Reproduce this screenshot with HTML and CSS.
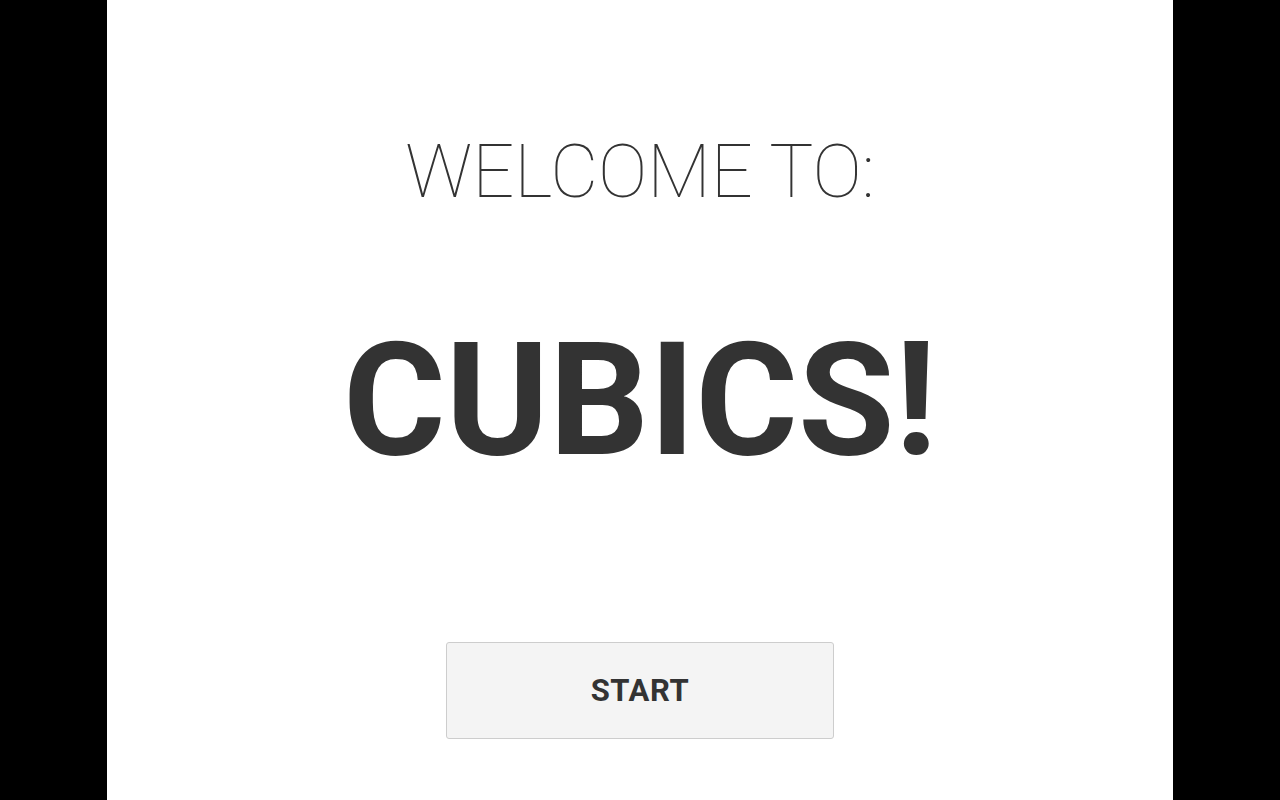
FILE: index.html
```html
<!DOCTYPE html>
<html>
<head>
<meta charset="utf-8">
<link rel="stylesheet" href="styles.css">
</head>
<body>
<div class="frame">
  <main class="screen">
    <h2 class="welcome">WELCOME TO:</h2>
    <h1 class="title">CUBICS!</h1>
    <button class="start">START</button>
  </main>
</div>
</body>
</html>
```
FILE: styles.css
```css
html, body {
  margin: 0;
  padding: 0;
  height: 100%;
  background: #000;
}
.frame {
  display: flex;
  justify-content: center;
  height: 800px;
}
.screen {
  width: 1066px;
  background: #fff;
  display: flex;
  flex-direction: column;
  align-items: center;
  font-family: Roboto, "Liberation Sans", sans-serif;
  color: #333;
  padding-top: 135px;
  box-sizing: border-box;
}
.welcome {
  margin: 0;
  font-size: 74px;
  line-height: 1;
  font-weight: 100;
  color: #333;
}
.title {
  margin: 113px 0 0;
  font-size: 157px;
  line-height: 1;
  font-weight: 700;
}
.start {
  margin-top: 163px;
  width: 388px;
  height: 97px;
  background: #f4f4f4;
  border: 1px solid #cdcdcd;
  border-radius: 3px;
  font-family: Roboto, "Liberation Sans", sans-serif;
  font-size: 31px;
  letter-spacing: 0.6px;
  font-weight: 700;
  color: #333;
  padding: 0;
}
```
